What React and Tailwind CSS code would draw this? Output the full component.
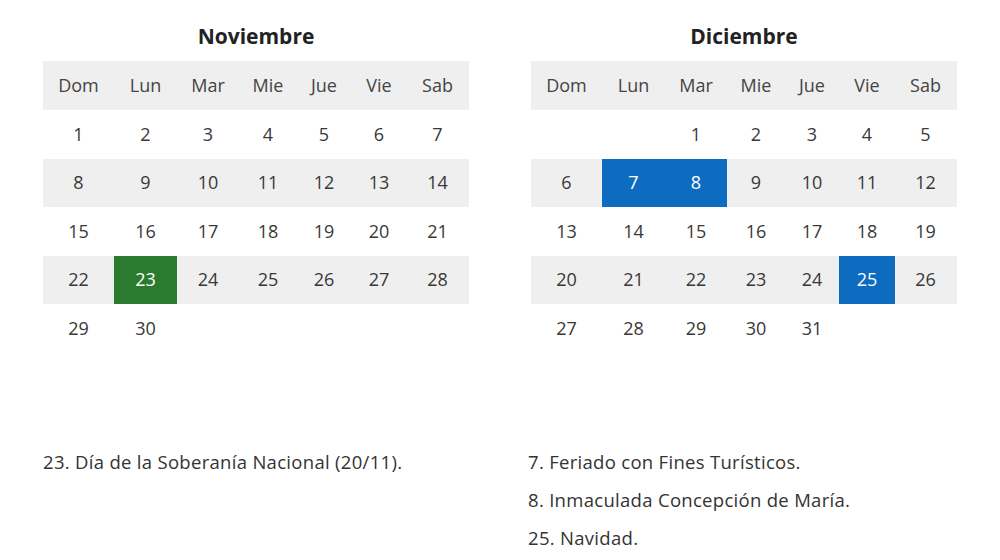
import React from "react";

const heads = ["Dom", "Lun", "Mar", "Mie", "Jue", "Vie", "Sab"];

const nov = [
  [1, 2, 3, 4, 5, 6, 7],
  [8, 9, 10, 11, 12, 13, 14],
  [15, 16, 17, 18, 19, 20, 21],
  [22, 23, 24, 25, 26, 27, 28],
  [29, 30, null, null, null, null, null],
];
const dic = [
  [null, null, 1, 2, 3, 4, 5],
  [6, 7, 8, 9, 10, 11, 12],
  [13, 14, 15, 16, 17, 18, 19],
  [20, 21, 22, 23, 24, 25, 26],
  [27, 28, 29, 30, 31, null, null],
];

function Calendar({ title, rows, marks }) {
  return (
    <div className="w-[426px]">
      <div className="h-[61px] flex items-center justify-center pt-[12px] text-[21px] font-bold text-[#222]">
        {title}
      </div>
      <div className="grid grid-cols-[71px_63px_62px_58px_54px_56px_61px] bg-[#efefef] h-[49px] items-center text-[18px] text-[#444]">
        {heads.map((h) => (
          <div key={h} className="text-center">{h}</div>
        ))}
      </div>
      {rows.map((r, i) => (
        <div
          key={i}
          className={
            "grid grid-cols-[71px_63px_62px_58px_54px_56px_61px] h-[48.5px] text-[18px] text-[#383838] " +
            (i % 2 === 1 ? "bg-[#efefef]" : "bg-white")
          }
        >
          {r.map((d, j) => {
            const m = d != null ? marks[d] : null;
            return (
              <div
                key={j}
                className={
                  "flex items-center justify-center " +
                  (m === "g" ? "bg-[#2b7b2f] text-white" : m === "b" ? "bg-[#0d6cbf] text-white" : "")
                }
              >
                {d ?? ""}
              </div>
            );
          })}
        </div>
      ))}
    </div>
  );
}

export default function App() {
  return (
    <div
      className="w-[1000px] h-[560px] bg-white overflow-hidden"
      style={{ fontFamily: '"Open Sans", "Noto Sans", sans-serif' }}
    >
      <div className="flex pl-[43px] gap-[62px]">
        <Calendar title="Noviembre" rows={nov} marks={{ 23: "g" }} />
        <Calendar title="Diciembre" rows={dic} marks={{ 7: "b", 8: "b", 25: "b" }} />
      </div>
      <div className="flex pl-[43px] mt-[90px] text-[18.5px] tracking-[0.3px] text-[#333]">
        <div className="w-[485px] leading-[38px]">23. Día de la Soberanía Nacional (20/11).</div>
        <div className="flex flex-col leading-[38px]">
          <div>7. Feriado con Fines Turísticos.</div>
          <div>8. Inmaculada Concepción de María.</div>
          <div>25. Navidad.</div>
        </div>
      </div>
    </div>
  );
}
